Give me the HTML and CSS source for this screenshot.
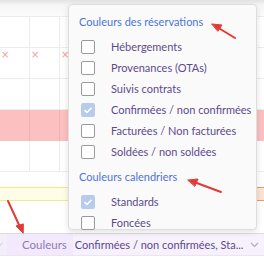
FILE: index.html
```html
<!DOCTYPE html>
<html>
<head>
<meta charset="utf-8">
<link rel="stylesheet" href="styles.css">
</head>
<body>
<div class="page">
  <div class="grid">
    <div class="row r-head"></div>
    <div class="row r-a"></div>
    <div class="row r-b"><span class="x">×</span><span class="x">×</span><span class="x">×</span></div>
    <div class="row r-c"></div>
    <div class="row r-pink"></div>
    <div class="row r-d"></div>
    <div class="row r-e"></div>
    <div class="row r-yellow"><span class="yl"></span><span class="peach"></span></div>
    <div class="row r-f"></div>
  </div>
  <div class="bar">
    <span class="bar-chev"><svg width="6" height="5" viewBox="0 0 6 5"><path d="M0 0.5 L3 3.5 L6 0.5" fill="none" stroke="#c8c2d4" stroke-width="1"/></svg></span>
    <div class="bar-field">
      <span class="bar-label">Couleurs</span>
      <div class="bar-select">
        <span class="bar-value">Confirmées / non confirmées, Sta...</span>
        <svg class="chev" width="9" height="6" viewBox="0 0 9 6"><path d="M1 1 L4.5 4.5 L8 1" fill="none" stroke="#b0a8c4" stroke-width="1.1"/></svg>
      </div>
    </div>
  </div>

  <div class="menu">
    <div class="menu-title">Couleurs des réservations</div>
    <ul class="list">
      <li><span class="cb"></span>Hébergements</li>
      <li><span class="cb"></span>Provenances (OTAs)</li>
      <li><span class="cb"></span>Suivis contrats</li>
      <li><span class="cb on"><svg width="14" height="14" viewBox="0 0 14 14"><path d="M3.5 7.2 L6 9.5 L10.5 4.8" fill="none" stroke="#fff" stroke-width="1.6"/></svg></span>Confirmées / non confirmées</li>
      <li><span class="cb"></span>Facturées / Non facturées</li>
      <li><span class="cb"></span>Soldées / non soldées</li>
    </ul>
    <div class="menu-title t2">Couleurs calendriers</div>
    <ul class="list">
      <li><span class="cb on"><svg width="14" height="14" viewBox="0 0 14 14"><path d="M3.5 7.2 L6 9.5 L10.5 4.8" fill="none" stroke="#fff" stroke-width="1.6"/></svg></span>Standards</li>
      <li><span class="cb"></span>Foncées</li>
    </ul>
  </div>

  <svg class="arrows" width="264" height="258" viewBox="0 0 264 258">
    <g stroke="#e53935" stroke-width="2" fill="#e53935" stroke-linecap="round">
      <line x1="235" y1="38" x2="217" y2="27"/>
      <polygon points="212,24 222,25 218,31" stroke-width="1"/>
      <line x1="221" y1="192" x2="194" y2="182"/>
      <polygon points="188,180 198,179 195,186" stroke-width="1"/>
      <line x1="8" y1="201" x2="20" y2="227"/>
      <polygon points="23,233 16,226 23,224" stroke-width="1"/>
    </g>
  </svg>
</div>
</body>
</html>
```

FILE: styles.css
```css
* { box-sizing: border-box; }
html, body { margin: 0; padding: 0; }
body {
  width: 264px;
  height: 258px;
  overflow: hidden;
  background: #fff;
  font-family: Lato, "Liberation Sans", sans-serif;
}
.page {
  position: relative;
  width: 264px;
  height: 258px;
  display: flex;
  flex-direction: column;
}
.grid {
  display: flex;
  flex-direction: column;
  height: 234px;
  flex: none;
  border-bottom: 1px solid #dcdcdc;
}
.row {
  border-bottom: 1px solid #ececec;
  background-image: repeating-linear-gradient(to right, transparent 0, transparent 29px, #ececec 29px, #ececec 30px);
  display: flex;
  flex: none;
}
.r-head {
  height: 17px;
  background: linear-gradient(#e2e2e2, #f6f6f6 5px, #fbfbfb);
}
.r-a { height: 31px; }
.r-b { height: 31px; align-items: flex-start; padding-top: 2px; }
.r-c { height: 31px; }
.r-pink {
  height: 31px;
  background-color: #fcc0c0;
  background-image: repeating-linear-gradient(to right, transparent 0, transparent 29px, #f4b0b0 29px, #f4b0b0 30px);
  border-bottom: none;
}
.r-d { height: 31px; }
.r-e { height: 15px; border-bottom: none; background-image: none; }
.r-yellow {
  height: 14px;
  border: none;
  background: none;
}
.yl {
  flex: 1;
  background: #fffde8;
  border-top: 1px solid #f1ea8a;
  border-bottom: 1px solid #f1ea8a;
}
.peach {
  width: 20px;
  background: #fde3d0;
  border-top: 1px solid #f49a5c;
  border-bottom: 1px solid #f49a5c;
}
.r-f { flex: 1; border-bottom: none; background-image: none; }
.x {
  width: 30px;
  padding-left: 1px;
  color: #f4a0a0;
  font-family: "DejaVu Sans", sans-serif;
  font-size: 10px;
  line-height: 10px;
}
.bar {
  height: 22px;
  flex: none;
  background: #f4eefb;
  display: flex;
  align-items: stretch;
  border-bottom: 1px solid #ebe4f4;
}
.bar-chev {
  width: 10px;
  display: flex;
  align-items: center;
  margin-left: -3px;
}
.bar-field {
  flex: 1;
  min-width: 0;
  display: flex;
  align-items: center;
  background: #f2eafc;
  padding-left: 15px;
}
.bar-label {
  color: #8c7bb8;
  font-size: 11.5px;
  margin-right: 6px;
}
.bar-select {
  flex: 1;
  min-width: 0;
  display: flex;
  align-items: center;
  height: 100%;
  background: #f6f1fc;
  padding-left: 2px;
  padding-right: 5px;
}
.bar-value {
  flex: 1;
  min-width: 0;
  overflow: hidden;
  color: #5b4a8d;
  font-size: 11px;
  white-space: nowrap;
}
.chev { margin-top: 1px; flex: none; margin-left: 3px; }

.menu {
  position: absolute;
  left: 68px;
  top: 4px;
  width: 189px;
  height: 226px;
  background: #fafafa;
  border: 1px solid #dedede;
  border-radius: 4px;
  box-shadow: 0 2px 6px rgba(0,0,0,0.12);
  padding: 9px 0 0 10px;
}
.menu-title {
  color: #4c74d6;
  font-size: 11px;
  line-height: 16px;
  height: 16px;
  white-space: nowrap;
}
.t2 { margin-top: 7px; }
.list {
  list-style: none;
  margin: 6px 0 0 0;
  padding: 0 0 0 2px;
}
.list li {
  display: flex;
  align-items: center;
  height: 21px;
  color: #5c4a8e;
  font-size: 11px;
  white-space: nowrap;
}
.cb {
  width: 14px;
  height: 14px;
  border: 1px solid #9a9a9a;
  border-radius: 2px;
  background: #fff;
  margin-right: 16px;
  flex: none;
  display: flex;
}
.cb.on {
  border: none;
  background: #b7cbeb;
}
.arrows {
  position: absolute;
  left: 0;
  top: 0;
  pointer-events: none;
}
```
